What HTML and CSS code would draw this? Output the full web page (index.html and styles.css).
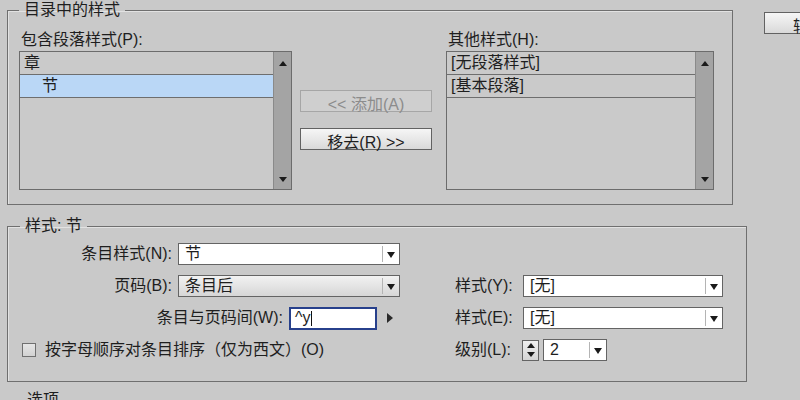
FILE: index.html
```html
<!DOCTYPE html>
<html lang="zh-CN">

<head>
    <meta charset="UTF-8">
    <title>目录</title>
    <link rel="stylesheet" href="styles.css">
</head>

<body>
    <div class="dialog">
        <div class="main">

            <!-- 目录中的样式 -->
            <fieldset class="group group-toc">
                <legend>目录中的样式</legend>
                <div class="toc-grid">
                    <div class="list-col">
                        <div class="field-label">包含段落样式(P):</div>
                        <div class="listbox">
                            <ul class="list-items">
                                <li>章</li>
                                <li class="selected indent">节</li>
                            </ul>
                            <div class="scrollbar">
                                <span class="arrow-up"></span>
                                <span class="arrow-down"></span>
                            </div>
                        </div>
                    </div>
                    <div class="move-buttons">
                        <button class="btn" disabled>&lt;&lt; 添加(A)</button>
                        <button class="btn">移去(R) &gt;&gt;</button>
                    </div>
                    <div class="list-col">
                        <div class="field-label">其他样式(H):</div>
                        <div class="listbox">
                            <ul class="list-items">
                                <li>[无段落样式]</li>
                                <li>[基本段落]</li>
                            </ul>
                            <div class="scrollbar">
                                <span class="arrow-up"></span>
                                <span class="arrow-down"></span>
                            </div>
                        </div>
                    </div>
                </div>
            </fieldset>

            <!-- 样式: 节 -->
            <fieldset class="group group-style">
                <legend>样式: 节</legend>
                <div class="style-grid">
                    <div class="row">
                        <label class="row-label">条目样式(N):</label>
                        <div class="select wide">
                            <span class="select-value">节</span>
                            <span class="select-arrow"></span>
                        </div>
                    </div>
                    <div></div>

                    <div class="row">
                        <label class="row-label">页码(B):</label>
                        <div class="select wide shaded">
                            <span class="select-value">条目后</span>
                            <span class="select-arrow"></span>
                        </div>
                    </div>
                    <div class="row">
                        <label class="side-label">样式(Y):</label>
                        <div class="select side">
                            <span class="select-value">[无]</span>
                            <span class="select-arrow"></span>
                        </div>
                    </div>

                    <div class="row">
                        <label class="row-label long">条目与页码间(W):</label>
                        <div class="text-input">^y<span class="caret"></span></div>
                        <span class="play-arrow"></span>
                    </div>
                    <div class="row">
                        <label class="side-label">样式(E):</label>
                        <div class="select side">
                            <span class="select-value">[无]</span>
                            <span class="select-arrow"></span>
                        </div>
                    </div>

                    <div class="row check-row">
                        <span class="checkbox"></span>
                        <label>按字母顺序对条目排序（仅为西文）(O)</label>
                    </div>
                    <div class="row">
                        <label class="side-label">级别(L):</label>
                        <div class="spinner">
                            <span class="spin-up"></span>
                            <span class="spin-down"></span>
                        </div>
                        <div class="select level">
                            <span class="select-value">2</span>
                            <span class="select-arrow"></span>
                        </div>
                    </div>
                </div>
            </fieldset>

            <fieldset class="group group-options">
                <legend>选项</legend>
            </fieldset>
        </div>

        <div class="side-buttons">
            <button class="btn btn-side">较少选项(F)</button>
        </div>
    </div>
</body>

</html>
```

FILE: styles.css
```css
* {
    margin: 0;
    padding: 0;
    box-sizing: border-box;
}

body {
    font-family: "Liberation Sans", "Noto Sans CJK SC", sans-serif;
    font-size: 16px;
    line-height: 20px;
    color: #1e1e1e;
    background-color: #c9c9c9;
    overflow: hidden;
}

.dialog {
    display: flex;
    gap: 17px;
    width: 800px;
    height: 400px;
}

.main {
    width: 747px;
    padding-left: 7px;
    flex-shrink: 0;
}

/* Group boxes */
.group {
    border: 1px solid #6f6f6f;
    box-shadow: inset 1px 1px 0 #e2e2e2;
}

.group legend {
    padding: 0 5px;
    line-height: 20px;
}

.group-toc {
    width: 726px;
    height: 205px;
    padding: 10px 12px 0 11px;
}

.group-style {
    width: 740px;
    height: 166px;
    margin-top: 11px;
    padding: 7px 8px 0 8px;
}

.group-style legend {
    margin-left: 4px;
}

.group-options {
    width: 740px;
    height: 40px;
    margin-top: 8px;
    padding: 0 8px;
}

.group-options legend {
    margin-left: 6px;
}

/* Top lists */
.toc-grid {
    display: grid;
    grid-template-columns: 273px 132px 274px;
    column-gap: 8px;
}

.toc-grid .list-col:last-child {
    margin-left: 6px;
}

.field-label {
    height: 21px;
    padding-left: 2px;
}

.listbox {
    display: flex;
    height: 139px;
    border: 1px solid #6c6c6c;
    background-color: #cacaca;
}

.list-items {
    flex: 1;
    list-style: none;
}

.list-items li {
    height: 23px;
    padding: 1px 4px 0;
    border-bottom: 1px solid #6e6e6e;
}

.list-items li.selected {
    background-color: #bad7f6;
}

.list-items li.indent {
    padding-left: 22px;
}

.scrollbar {
    width: 18px;
    display: flex;
    flex-direction: column;
    justify-content: space-between;
    align-items: center;
    padding: 9px 0 7px;
    background-color: #a4a4a4;
    border-left: 1px solid #8a8a8a;
}

.arrow-up,
.arrow-down {
    width: 0;
    height: 0;
    border-left: 4px solid transparent;
    border-right: 4px solid transparent;
}

.arrow-up {
    border-bottom: 5px solid #1a1a1a;
}

.arrow-down {
    border-top: 5px solid #1a1a1a;
}

/* Buttons */
.move-buttons {
    display: flex;
    flex-direction: column;
    gap: 16px;
    padding-top: 60px;
}

.btn {
    height: 22px;
    font-family: inherit;
    font-size: 16px;
    color: #1e1e1e;
    border: 1px solid #626262;
    background: linear-gradient(#f6f6f6, #d9d9d9);
}

.btn:disabled {
    color: #8c8c8c;
    border-color: #a6a6a6;
    background: #cfcfcf;
}

.side-buttons {
    padding-top: 12px;
}

.btn-side {
    width: 96px;
    text-align: left;
    padding-left: 28px;
    white-space: nowrap;
}

/* Style section */
.style-grid {
    display: grid;
    grid-template-columns: 436px 1fr;
    grid-auto-rows: 22px;
    row-gap: 10px;
}

.row {
    display: flex;
    align-items: center;
    gap: 6px;
}

.row-label {
    width: 156px;
    text-align: right;
}

.row-label.long {
    width: 267px;
}

.side-label {
    width: 65px;
    padding-left: 3px;
}

.select {
    display: flex;
    height: 22px;
    border: 1px solid #646464;
    background-color: #fff;
}

.select.wide {
    width: 222px;
}

.select.side {
    width: 200px;
}

.select.level {
    width: 64px;
}

.select.shaded {
    background: linear-gradient(#f2f2f2, #d6d6d6);
}

.select-value {
    flex: 1;
    padding-left: 6px;
}

.select-arrow {
    position: relative;
    width: 17px;
    border-left: 1px solid #b4b4b4;
    margin: 2px 0;
}

.select-arrow::after {
    content: "";
    position: absolute;
    left: 4px;
    top: 6px;
    border-left: 4px solid transparent;
    border-right: 4px solid transparent;
    border-top: 6px solid #1a1a1a;
}

.text-input {
    display: flex;
    align-items: center;
    width: 88px;
    height: 23px;
    padding-left: 4px;
    border: 2px solid #27408c;
    background-color: #fff;
}

.caret {
    width: 1px;
    height: 15px;
    background-color: #111;
}

.play-arrow {
    margin-left: 4px;
    border-top: 5px solid transparent;
    border-bottom: 5px solid transparent;
    border-left: 6px solid #2a2a2a;
}

.check-row {
    padding-left: 6px;
    gap: 9px;
}

.checkbox {
    width: 14px;
    height: 14px;
    border: 1px solid #707070;
    background: linear-gradient(#e6e6e6, #d2d2d2);
}

.spinner {
    display: flex;
    flex-direction: column;
    justify-content: space-around;
    align-items: center;
    width: 17px;
    height: 21px;
    margin-left: -1px;
    margin-right: -2px;
    border: 1px solid #646464;
    background: linear-gradient(#f0f0f0, #d4d4d4);
}

.spin-up,
.spin-down {
    width: 0;
    height: 0;
    border-left: 4px solid transparent;
    border-right: 4px solid transparent;
}

.spin-up {
    border-bottom: 5px solid #1a1a1a;
}

.spin-down {
    border-top: 5px solid #1a1a1a;
}
```
